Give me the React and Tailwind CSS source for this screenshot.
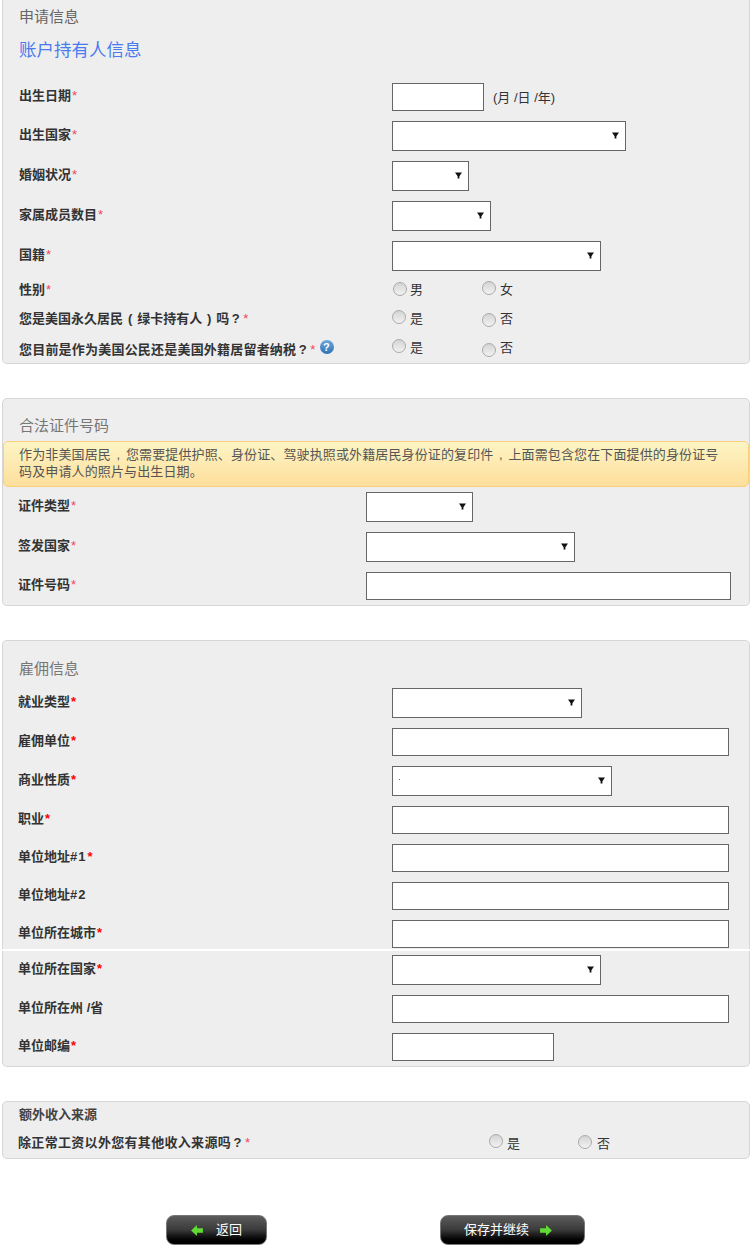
import React from 'react';

const FONT = "font-['Liberation_Sans','Noto_Sans_CJK_SC',sans-serif]";
const FULLWIDTH = {
  '，': [',', 'w-[15px]'],
  '？': ['?', 'w-[13px]'],
  '（': ['(', 'w-[14px]'],
  '）': [')', 'w-[14px]'],
};

// full-width punctuation sits centred in its cell in the reference
function Cjk({ text }) {
  return (
    <>
      {Array.from(text).map((ch, i) => {
        if (FULLWIDTH[ch]) {
          return <span key={i} className={`inline-block text-center ${FULLWIDTH[ch][1]}`}>{FULLWIDTH[ch][0]}</span>;
        }
        if (ch === '#' || ch === '1' || ch === '2') {
          return <span key={i} className="pr-[1px]">{ch}</span>;
        }
        return ch;
      })}
    </>
  );
}

function Star({ bold }) {
  return <span className={`ml-[1px] ${bold ? 'font-bold text-[#f00]' : 'font-normal text-[#f0485c]'}`}>*</span>;
}

function Label({ text, required, boldStar, width, left, top, children }) {
  return (
    <div
      className={`shrink-0 text-[13px] leading-[16px] font-bold text-[#333] whitespace-nowrap ${width} ${left} ${top}`}
    >
      <Cjk text={text} />
      {required && <Star bold={boldStar} />}
      {children}
    </div>
  );
}

function Select({ width }) {
  return (
    <div className={`relative h-[30px] ${width}`}>
      <select className="block h-full w-full appearance-none rounded-none border border-[#666] bg-white" />
      <svg className="absolute right-[7px] top-[11px] h-[7px] w-[7px]" viewBox="0 0 7 7">
        <path d="M0 0.5H7L4.4 4.2V6.5H2.6V4.2Z" fill="#111" />
      </svg>
    </div>
  );
}

function Input({ width }) {
  return <input type="text" className={`block h-[28px] border border-[#666] bg-white ${width}`} />;
}

function Radio({ top, left = '', gap = 'mr-[4px]', text, labelTop = 'mt-0' }) {
  return (
    <div className={`flex shrink-0 items-start ${left}`}>
      <input
        type="radio"
        className={`block h-[14px] w-[14px] appearance-none rounded-full border border-[#aaa] bg-gradient-to-b from-[#d4d4d4] to-[#f2f2f2] ${top} ${gap}`}
      />
      <span className={`text-[13px] leading-[16px] text-[#333] ${labelTop}`}>{text}</span>
    </div>
  );
}

// one label + control row, the control column starts at a fixed x per panel
function Row({ label, required = true, boldStar, kind, width, height, colW = 'w-[389px]', left = 'pl-[16px]' }) {
  return (
    <div className={`flex items-start ${height}`}>
      <Label
        text={label}
        required={required}
        boldStar={boldStar}
        width={colW}
        left={left}
        top={kind === 'select' ? 'pt-[6px]' : 'pt-[5px]'}
      />
      {kind === 'select' ? <Select width={width} /> : <Input width={width} />}
    </div>
  );
}

function RadioRow({ label, height, first, second, help, labelW = 'w-[389px]' }) {
  return (
    <div className={`flex items-start ${height}`}>
      <Label text={label} required width={labelW} left="pl-[16px]" top="pt-[2px]">
        {help && (
          <span className="ml-[4px] inline-flex h-[14px] w-[14px] items-center justify-center rounded-full bg-gradient-to-b from-[#6fa8dc] to-[#2a72b5] align-[3px] text-[11px] leading-none font-bold text-white">
            ?
          </span>
        )}
      </Label>
      {first}
      {second}
    </div>
  );
}

function Button({ width, children }) {
  return (
    <button className={`flex h-[30px] items-center justify-center rounded-[8px] border border-[#777] bg-gradient-to-b from-[#5c5c5c] via-[#3a3a3a] to-[#000] text-[13px] text-white ${width}`}>
      {children}
    </button>
  );
}

function Arrow({ flip }) {
  return (
    <svg className={`h-[11px] w-[12px] ${flip ? 'rotate-180' : ''}`} viewBox="0 0 13 12">
      <path d="M0 3.5H6.5V0L13 6L6.5 12V8.5H0Z" fill="#62d934" />
    </svg>
  );
}

const PANEL = 'border border-[#d6d6d6] bg-[#eee]';

export default function App() {
  return (
    <div className={`h-[1247px] w-[750px] overflow-hidden bg-white pl-[2px] ${FONT}`}>
      {/* 申请信息 */}
      <section className={`${PANEL} h-[364px] rounded-b-[5px] border-t-0`}>
        <div className="pl-[16px] pt-[8px] text-[15px] leading-[18px] text-[#666]">申请信息</div>
        <div className="pl-[16px] pt-[12px] text-[17.5px] leading-[24px] text-[#4a7bee]">账户持有人信息</div>
        <div className="mt-[21px] flex h-[38px] items-start">
          <Label text="出生日期" required width="w-[389px]" left="pl-[16px]" top="pt-[5px]" />
          <Input width="w-[92px]" />
          <span className="ml-[9px] mt-[7px] text-[13px] leading-[16px] text-[#333]">(月 /日 /年)</span>
        </div>
        <Row label="出生国家" kind="select" width="w-[234px]" height="h-[40px]" />
        <Row label="婚姻状况" kind="select" width="w-[77px]" height="h-[40px]" />
        <Row label="家属成员数目" kind="select" width="w-[99px]" height="h-[40px]" />
        <Row label="国籍" kind="select" width="w-[209px]" height="h-[39px]" />
        <RadioRow
          label="性别"
          height="h-[29px]"
          first={<Radio left="ml-[1px]" gap="mr-[3px]" top="mt-[2px]" text="男" labelTop="mt-[2px]" />}
          second={<Radio left="ml-[59px]" top="mt-[1px]" text="女" labelTop="mt-[2px]" />}
        />
        <RadioRow
          label="您是美国永久居民（绿卡持有人）吗？"
          height="h-[29px]"
          first={<Radio top="mt-[1px]" text="是" labelTop="mt-[2px]" />}
          second={<Radio left="ml-[59px]" top="mt-[4px]" text="否" labelTop="mt-[2px]" />}
        />
        <RadioRow
          label="您目前是作为美国公民还是美国外籍居留者纳税？"
          labelW="w-[389px] tracking-[0.2px]"
          height="h-[24px]"
          help
          first={<Radio top="mt-[1px]" text="是" labelTop="mt-[2px]" />}
          second={<Radio left="ml-[59px]" top="mt-[5px]" text="否" labelTop="mt-[2px]" />}
        />
      </section>

      {/* 合法证件号码 */}
      <section className={`${PANEL} mt-[34px] h-[208px] rounded-[5px]`}>
        <div className="pl-[16px] pt-[18px] text-[15px] leading-[18px] text-[#777]">合法证件号码</div>
        <div className="mt-[6px] h-[46px] rounded-[5px] border border-[#f9cf7c] bg-gradient-to-b from-[#fdf5c4] to-[#fddf9c] pl-[15px] pr-[20px] pt-[4px] text-[13px] leading-[17px] tracking-[0.12px] text-[#555]">
          <Cjk text="作为非美国居民，您需要提供护照、身份证、驾驶执照或外籍居民身份证的复印件，上面需包含您在下面提供的身份证号码及申请人的照片与出生日期。" />
        </div>
        <div className="mt-[5px]">
          <Row label="证件类型" kind="select" width="w-[107px]" height="h-[40px]" colW="w-[363px]" left="pl-[15px]" />
          <Row label="签发国家" kind="select" width="w-[209px]" height="h-[40px]" colW="w-[363px]" left="pl-[15px]" />
          <Row label="证件号码" kind="input" width="w-[365px]" height="h-[28px]" colW="w-[363px]" left="pl-[15px]" />
        </div>
      </section>

      {/* 雇佣信息, the page has a white seam across this panel */}
      <section className={`${PANEL} mt-[34px] h-[309px] rounded-t-[5px] border-b-0`}>
        <div className="pl-[16px] pt-[19px] text-[15px] leading-[18px] text-[#777]">雇佣信息</div>
        <div className="mt-[10px]">
          <Row label="就业类型" boldStar kind="select" width="w-[190px]" height="h-[40px]" left="pl-[15px]" />
          <Row label="雇佣单位" boldStar kind="input" width="w-[337px]" height="h-[38px]" left="pl-[15px]" />
          <div className="flex h-[40px] items-start">
            <Label text="商业性质" required boldStar width="w-[389px]" left="pl-[15px]" top="pt-[6px]" />
            <div className="relative">
              <Select width="w-[220px]" />
              <span className="absolute left-[7px] top-[13px] h-px w-px bg-[#a85a10]" />
            </div>
          </div>
          <Row label="职业" boldStar kind="input" width="w-[337px]" height="h-[38px]" left="pl-[15px]" />
          <Row label="单位地址#1" boldStar kind="input" width="w-[337px]" height="h-[38px]" left="pl-[15px]" />
          <Row label="单位地址#2" required={false} kind="input" width="w-[337px]" height="h-[38px]" left="pl-[15px]" />
          <Row label="单位所在城市" boldStar kind="input" width="w-[337px]" height="h-[28px]" left="pl-[15px]" />
        </div>
      </section>
      <section className={`${PANEL} mt-[2px] h-[116px] rounded-b-[5px] border-t-0 pt-[4px]`}>
        <Row label="单位所在国家" boldStar kind="select" width="w-[209px]" height="h-[40px]" left="pl-[15px]" />
        <Row label="单位所在州 /省" required={false} kind="input" width="w-[337px]" height="h-[38px]" left="pl-[15px]" />
        <Row label="单位邮编" boldStar kind="input" width="w-[162px]" height="h-[28px]" left="pl-[15px]" />
      </section>

      {/* 额外收入来源 */}
      <section className={`${PANEL} mt-[34px] h-[58px] rounded-[5px]`}>
        <div className="pl-[16px] pt-[5px] text-[13px] leading-[16px] font-bold text-[#444]">额外收入来源</div>
        <div className="mt-[11px] flex items-start">
          <Label text="除正常工资以外您有其他收入来源吗？" required width="w-[486px] tracking-[0.3px]" left="pl-[15px]" top="pt-[1px]" />
          <Radio top="mt-0" text="是" labelTop="mt-[2px]" />
          <Radio top="mt-[1px]" left="ml-[58px]" gap="mr-[5px]" text="否" labelTop="mt-[2px]" />
        </div>
      </section>

      <div className="mt-[56px] flex pl-[164px]">
        <Button width="w-[101px] gap-[13px]">
          <Arrow flip />
          <span>返回</span>
        </Button>
        <div className="ml-[173px]">
          <Button width="w-[145px] gap-[11px] pr-[9px]">
            <span>保存并继续</span>
            <Arrow />
          </Button>
        </div>
      </div>
    </div>
  );
}
